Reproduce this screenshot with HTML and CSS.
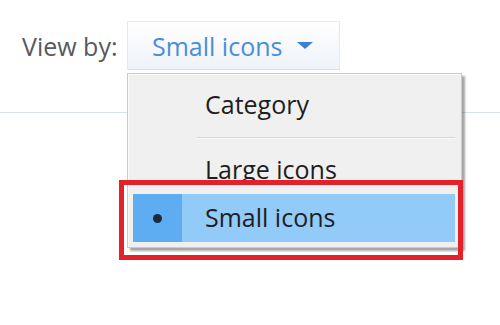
FILE: index.html
```html
<!DOCTYPE html>
<html>
<head>
    <meta content="text/html; charset=utf-8" http-equiv="Content-Type">
    <title>View by</title>
    <link rel="stylesheet" href="styles.css">
</head>
<body>
    <div class="toolbar">
        <span class="label">View by:</span>
        <button class="view-btn">Small icons<span class="caret"></span></button>
    </div>
    <div class="rule"></div>

    <div class="menu">
        <div class="item"><span class="gutter"></span><span class="text">Category</span></div>
        <div class="separator"></div>
        <div class="item"><span class="gutter"></span><span class="text">Large icons</span></div>
        <div class="item selected"><span class="gutter"><span class="dot"></span></span><span class="text">Small icons</span></div>
    </div>

    <div class="callout"></div>
</body>
</html>
```

FILE: styles.css
```css
body {
    font-family: "Open Sans", "Noto Sans", sans-serif;
    margin: 0;
    background: #fff;
    color: #1e1e1e;
    position: relative;
    height: 325px;
    overflow: hidden;
}

.toolbar {
    display: flex;
    align-items: center;
    padding: 21px 0 0 22px;
    height: 49px;
}

.label {
    width: 105px;
    font-size: 25px;
    color: #555a60;
}

.view-btn {
    display: flex;
    align-items: center;
    gap: 15px;
    box-sizing: border-box;
    width: 213px;
    height: 49px;
    padding: 0 0 0 24px;
    border: 1px solid #e6e9ee;
    border-bottom-color: #dcdfe4;
    background: linear-gradient(#ffffff, #eef3f9);
    font-family: inherit;
    font-size: 25px;
    color: #4a8ed6;
}

.caret {
    width: 0;
    height: 0;
    border-left: 8px solid transparent;
    border-right: 8px solid transparent;
    border-top: 7px solid #3b80d2;
}

.rule {
    margin-top: 42px;
    height: 1px;
    background: #dae3ec;
}

/* dropdown */
.menu {
    position: absolute;
    left: 127px;
    top: 73px;
    width: 322px;
    padding: 7px 6px 5px 5px;
    background: #f0f0f0;
    border: 1px solid #cbcbcb;
    box-shadow: inset 1px 1px 0 #fafafa, 3px 3px 2px rgba(0, 0, 0, 0.35);
}

.item {
    display: flex;
    align-items: center;
    height: 48px;
    font-size: 25px;
}

.gutter {
    width: 49px;
    height: 100%;
    display: flex;
    align-items: center;
    justify-content: center;
    margin-right: 23px;
}

.text {
    padding-bottom: 2px;
}

.separator {
    height: 1px;
    margin: 8px 0 8px 64px;
    background: #d7d7d7;
    box-shadow: 0 1px 0 #fbfbfb;
}

.selected {
    background: #92caf8;
}

.selected .gutter {
    background: #5eacf2;
}

.dot {
    width: 9px;
    height: 9px;
    border-radius: 50%;
    background: #1b2a3b;
}

.callout {
    position: absolute;
    left: 119px;
    top: 180px;
    width: 334px;
    height: 70px;
    border: 5px solid #e2212a;
}
```
